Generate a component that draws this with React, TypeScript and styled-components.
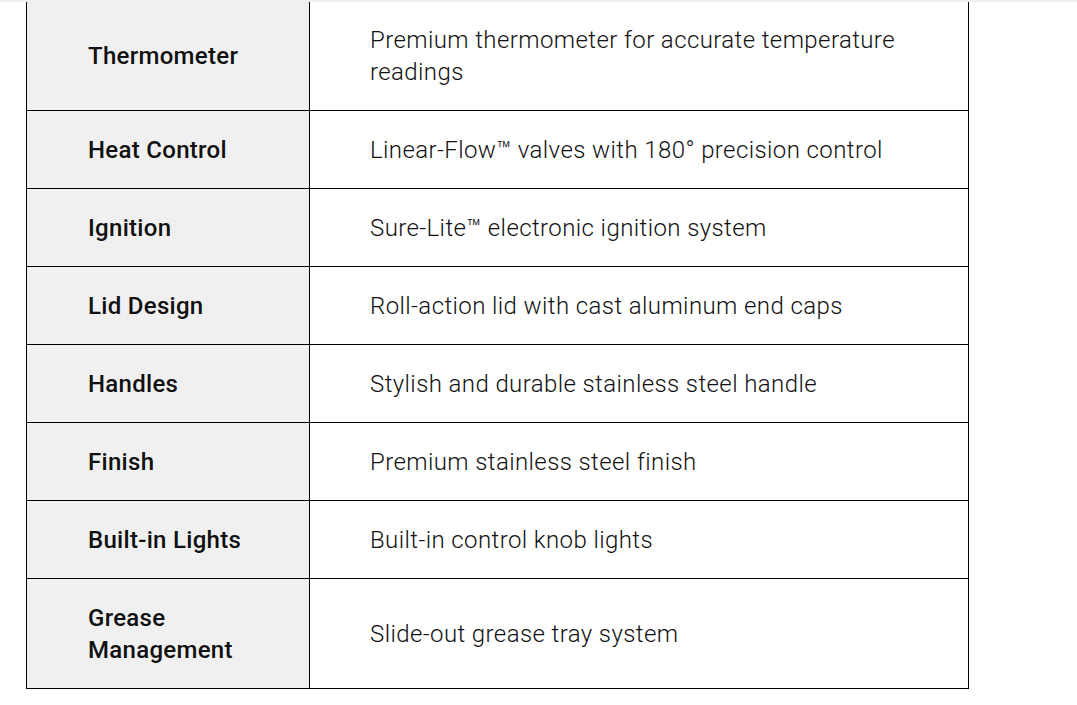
import React from "react";
import styled, { createGlobalStyle } from "styled-components";

const Global = createGlobalStyle`
  html, body { margin: 0; padding: 0; background: #ffffff; }
  body { font-family: Roboto, "Noto Sans", Arial, sans-serif; color: #111; }
  *, *::before, *::after { box-sizing: border-box; }
`;

const TopRule = styled.div`
  height: 2px;
  background: #efefef;
`;

const Wrap = styled.div`
  padding: 0 0 0 26px;
`;

const Table = styled.table`
  width: 943px;
  border-collapse: collapse;
  table-layout: fixed;
  border: 1px solid #000;
  border-top: none;
`;

const LabelCol = styled.col`
  width: 283px;
`;

const Row = styled.tr<{ $first?: boolean }>`
  border-bottom: 1px solid #000;

  & > th,
  & > td {
    padding-top: ${(p) => (p.$first ? "21.5px" : "22.5px")};
  }
`;

const Label = styled.th`
  background: #f0f0f0;
  border-right: 1px solid #000;
  text-align: left;
  font-weight: 500;
  font-size: 24px;
  line-height: 32px;
  letter-spacing: 0.3px;
  padding: 22.5px 50px 22.5px 61px;
  color: #111;
  vertical-align: middle;
`;

const Value = styled.td`
  font-weight: 300;
  font-size: 24px;
  line-height: 32px;
  letter-spacing: 0.4px;
  padding: 22.5px 60px 22.5px 60px;
  color: #111;
  vertical-align: middle;
`;

const rows: [string, string][] = [
  ["Thermometer", "Premium thermometer for accurate temperature readings"],
  ["Heat Control", "Linear-Flow™ valves with 180° precision control"],
  ["Ignition", "Sure-Lite™ electronic ignition system"],
  ["Lid Design", "Roll-action lid with cast aluminum end caps"],
  ["Handles", "Stylish and durable stainless steel handle"],
  ["Finish", "Premium stainless steel finish"],
  ["Built-in Lights", "Built-in control knob lights"],
  ["Grease Management", "Slide-out grease tray system"],
];

export default function App() {
  return (
    <>
      <Global />
      <TopRule />
      <Wrap>
        <Table>
          <colgroup>
            <LabelCol />
            <col />
          </colgroup>
          <tbody>
            {rows.map(([k, v], i) => (
              <Row key={k} $first={i === 0}>
                <Label>{k}</Label>
                <Value>{v}</Value>
              </Row>
            ))}
          </tbody>
        </Table>
      </Wrap>
    </>
  );
}
